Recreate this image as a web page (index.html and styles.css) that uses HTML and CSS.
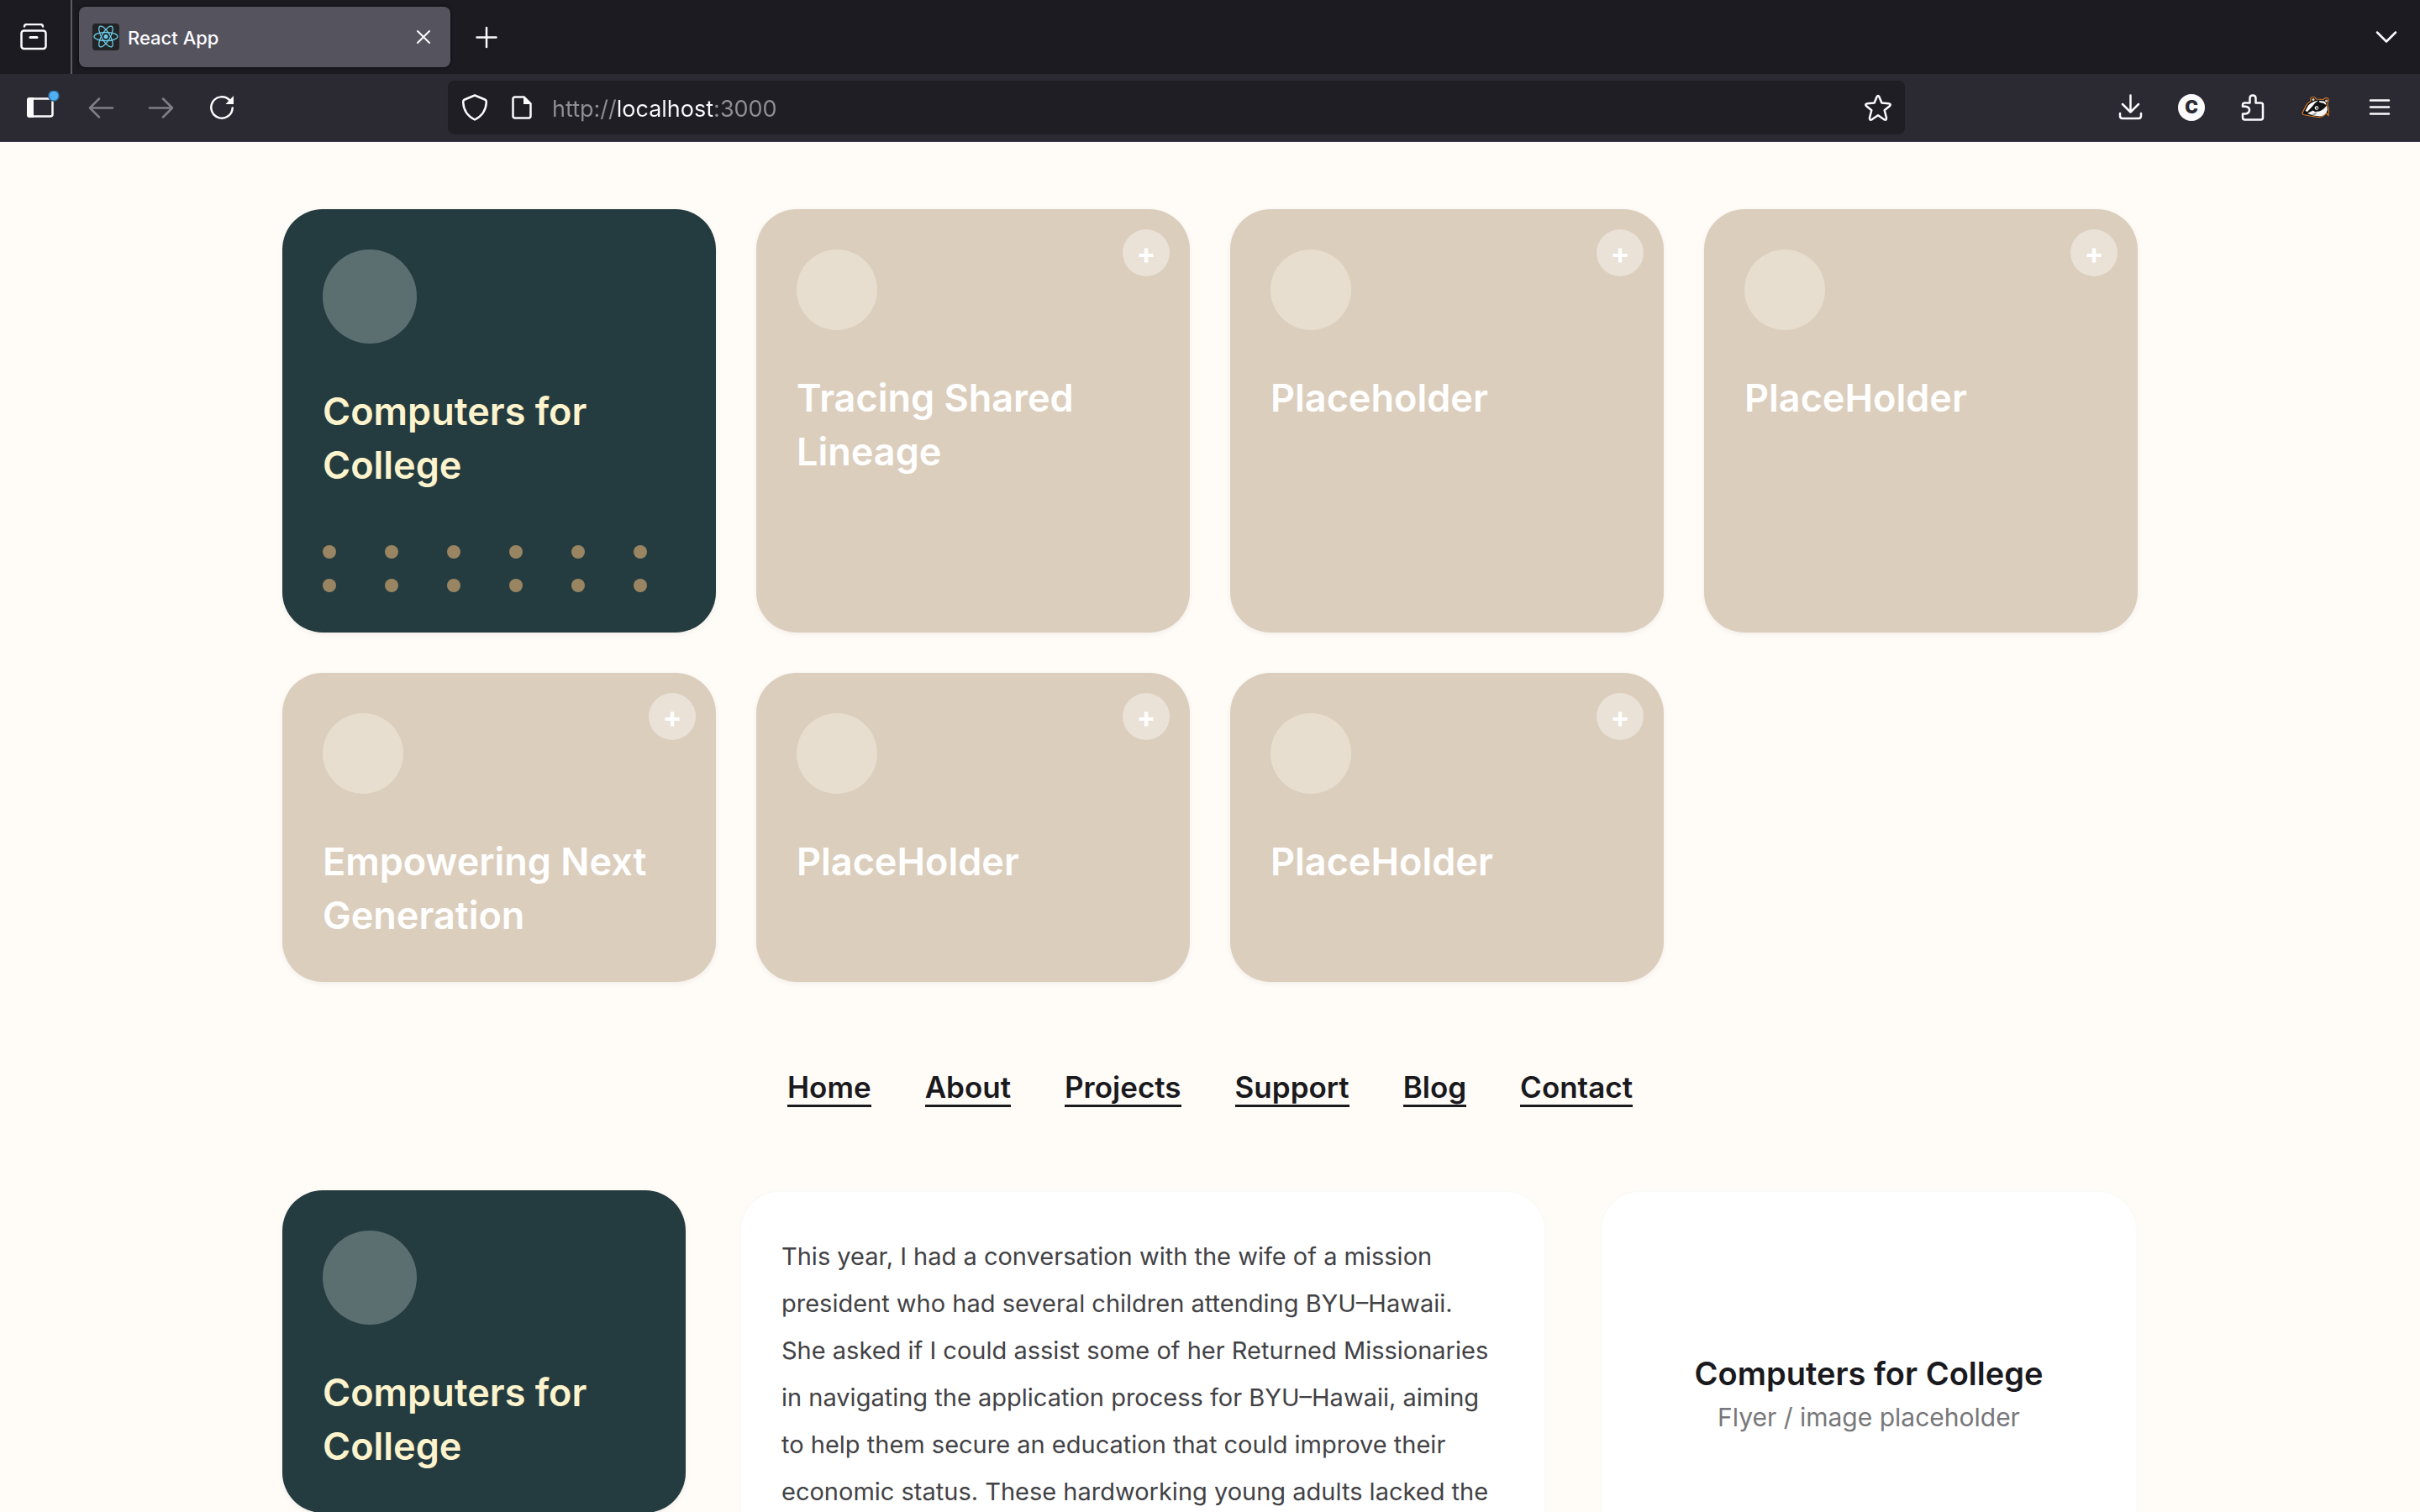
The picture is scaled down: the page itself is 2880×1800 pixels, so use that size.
FILE: index.html
```html
<!DOCTYPE html>
<html lang="en">
<head>
<meta charset="utf-8">
<title>React App</title>
<link rel="stylesheet" href="styles.css">
</head>
<body>
<header class="browser">
  <div class="tabbar">
    <button class="tabbar-button recent" aria-label="Recent browsing">
      <svg class="icon" viewBox="0 0 32 32"><path d="M5 3.500Q5 1 8 1H24Q27 1 27 3.500" /><rect x="1.500" y="8.500" width="29" height="21.500" rx="3"/><path d="M12 16.500H20" stroke-width="3"/></svg>
    </button>
    <div class="tab">
      <svg class="favicon" viewBox="0 0 32 32"><rect width="32" height="32" rx="4" fill="#222425"/><g fill="none" stroke="#6dcdea" stroke-width="1.300"><ellipse cx="16" cy="15.500" rx="14" ry="5"/><ellipse cx="16" cy="15.500" rx="14" ry="5" transform="rotate(60 16 15.500)"/><ellipse cx="16" cy="15.500" rx="14" ry="5" transform="rotate(120 16 15.500)"/></g><circle cx="16" cy="15.500" r="2.500" fill="#6dcdea"/></svg>
      <span class="tab-title">React App</span>
      <button class="tab-close" aria-label="Close tab"><svg class="icon-small" viewBox="0 0 20 20"><path d="M3 3L17 17M17 3L3 17"/></svg></button>
    </div>
    <button class="tabbar-button" aria-label="New tab"><svg class="icon" viewBox="0 0 32 32"><path d="M16 5V28M4.500 16.500H27.500"/></svg></button>
    <button class="tabbar-button all-tabs" aria-label="List all tabs"><svg class="icon" viewBox="0 0 32 32"><path d="M5 10.500L16 21.500L27 10.500"/></svg></button>
  </div>
  <div class="toolbar">
    <div class="tools">
      <button class="tool" aria-label="Sidebar"><svg class="icon wide" viewBox="0 0 48 40"><rect x="9.500" y="9.500" width="29" height="21" rx="2.500"/><path d="M8 11Q8 8 11 8H16V32H11Q8 32 8 29Z" fill="#fbfbfe" stroke="none"/><circle cx="40" cy="6" r="7" fill="#2f5f80" stroke="none"/><circle cx="40" cy="6" r="5.500" fill="#4fb0f3" stroke="none"/></svg></button>
      <button class="tool dim" aria-label="Back"><svg class="icon" viewBox="0 0 32 32"><path d="M30 16.500H3.500M14 5.500L3 16.500L14 27.500"/></svg></button>
      <button class="tool dim" aria-label="Forward"><svg class="icon" viewBox="0 0 32 32"><path d="M2 16.500H28.500M18 5.500L29 16.500L18 27.500"/></svg></button>
      <button class="tool" aria-label="Reload"><svg class="icon" viewBox="0 0 32 32"><path d="M25 7A12.700 12.700 0 1 0 28.700 16.500"/><path d="M30 2V12H20.500Z" fill="#fbfbfe" stroke="none"/></svg></button>
    </div>
    <div class="urlbar">
      <button class="url-button" aria-label="Tracking protection"><svg class="icon" viewBox="0 0 32 32"><path d="M16 1.500L28 6.500Q30 7.300 29.800 10Q29 24 16 30.500Q3 24 2.200 10Q2 7.300 4 6.500Z"/></svg></button>
      <button class="url-button" aria-label="Site information"><svg class="icon" viewBox="0 0 32 32"><path d="M18.500 3.500H8Q5.500 3.500 5.500 6V26Q5.500 28.500 8 28.500H24Q26.500 28.500 26.500 26V11.500Z"/><path d="M18 3V12H27.500Z" fill="#fbfbfe" stroke="none"/></svg></button>
      <input class="url-input" type="text" aria-label="Address" value="http://localhost:3000">
      <button class="url-button" aria-label="Bookmark this page"><svg class="icon" viewBox="0 0 32 32"><path d="M14.600 3.200Q16 .8 17.400 3.200L20.400 10.500L28.700 11.300Q32 11.800 29.800 14.300L23.700 19.300L26 28.300Q26.300 31.500 23.300 30.300L16 25.300L8.700 30.300Q5.700 31.500 6 28.300L8.300 19.300L2.200 14.300Q0 11.800 3.300 11.300L11.600 10.500Z"/></svg></button>
    </div>
    <div class="tools">
      <button class="tool" aria-label="Downloads"><svg class="icon" viewBox="0 0 32 32"><path d="M15.500 1.500V21.500M6 12L15.500 21.500L25 12M3 23V26Q3 29 6 29H25Q28 29 28 26V23"/></svg></button>
      <button class="tool" aria-label="Extension C"><span class="letter-badge">C</span></button>
      <button class="tool" aria-label="Extensions"><svg class="icon" viewBox="0 0 32 32"><path d="M13.500 10.500V5Q13.500 1.500 17 1.500Q20.500 1.500 20.500 5V10.500H26.500Q29 10.500 29 13V28Q29 30.500 26.500 30.500H7.500Q5 30.500 5 28V23.500H8.500Q13 22.500 13 19Q13 15.500 8.500 14.800H5V13Q5 10.500 7.500 10.500Z"/></svg></button>
      <button class="tool" aria-label="Privacy Badger"><svg class="wide-badge" viewBox="0 0 40 32"><path d="M8.500 21.500L12.500 13.500Q14 10.500 18 8.500Q17 3.500 20.500 3.500Q23.500 3.500 24.500 6L33 6.500Q35 4 38 5Q40.500 7.500 38 10.500L38 14L39.500 17L39 25.500L36.500 22.500Q33 27.500 27 27.500L17 26L9.500 24.500Q7.500 23.500 8.500 21.500Z" fill="#121212" stroke="#dc7b27" stroke-width="1.200"/><circle cx="21" cy="6.500" r="1.500" fill="#d8d8d8"/><circle cx="36.500" cy="8" r="1.500" fill="#d8d8d8"/><path d="M11.500 20L15 13.500Q19 9 27 7.500Q22 11 19.500 15L14 21Z" fill="#fff"/><path d="M28 8L34 8.500Q37 11 36.500 13Q33 9.800 28.500 10Z" fill="#fff"/><path d="M14 23L20.500 19.500L23 21L28 20.500Q33 19 37 13.500L38 18.500Q36 25.500 29 26.500L21 25.500Z" fill="#f5f5f5"/><circle cx="25" cy="16.500" r="2.300" fill="#fff"/><circle cx="25.300" cy="16.700" r="1.100" fill="#111"/><path d="M19 24.500L25 21L24.500 24L21.500 25.500Z" fill="#a5a5a5"/></svg></button>
      <button class="tool menu" aria-label="Application menu"><svg class="icon" viewBox="0 0 32 32"><path d="M5 7.500H27M5 15.500H27M5 23.500H27" stroke-width="2.500"/></svg></button>
    </div>
  </div>
</header>

<main class="page">
  <section class="projects">
    <article class="card featured">
      <span class="avatar"></span>
      <h2 class="card-title">Computers for College</h2>
      <div class="dots"><i class="dot"></i><i class="dot"></i><i class="dot"></i><i class="dot"></i><i class="dot"></i><i class="dot"></i><i class="dot"></i><i class="dot"></i><i class="dot"></i><i class="dot"></i><i class="dot"></i><i class="dot"></i></div>
    </article>
    <article class="card"><span class="avatar"></span><h2 class="card-title">Tracing Shared Lineage</h2><button class="expand" aria-label="Open">+</button></article>
    <article class="card"><span class="avatar"></span><h2 class="card-title">Placeholder</h2><button class="expand" aria-label="Open">+</button></article>
    <article class="card"><span class="avatar"></span><h2 class="card-title">PlaceHolder</h2><button class="expand" aria-label="Open">+</button></article>
    <article class="card"><span class="avatar"></span><h2 class="card-title">Empowering Next Generation</h2><button class="expand" aria-label="Open">+</button></article>
    <article class="card"><span class="avatar"></span><h2 class="card-title">PlaceHolder</h2><button class="expand" aria-label="Open">+</button></article>
    <article class="card"><span class="avatar"></span><h2 class="card-title">PlaceHolder</h2><button class="expand" aria-label="Open">+</button></article>
  </section>

  <nav class="site-nav">
    <a href="#home">Home</a>
    <a href="#about">About</a>
    <a href="#projects">Projects</a>
    <a href="#support">Support</a>
    <a href="#blog">Blog</a>
    <a href="#contact">Contact</a>
  </nav>

  <section class="detail">
    <article class="card featured">
      <span class="avatar"></span>
      <h2 class="card-title">Computers for College</h2>
    </article>
    <article class="panel">
      <p class="story">This year, I had a conversation with the wife of a mission president who had several children attending BYU–Hawaii. She asked if I could assist some of her Returned Missionaries in navigating the application process for BYU–Hawaii, aiming to help them secure an education that could improve their economic status. These hardworking young adults lacked the</p>
    </article>
    <aside class="panel flyer">
      <h3 class="flyer-title">Computers for College</h3>
      <p class="flyer-note">Flyer / image placeholder</p>
    </aside>
  </section>
</main>
</body>
</html>
```
FILE: styles.css
```css
* { box-sizing: border-box; }

body {
  margin: 0;
  height: 100vh;
  display: flex;
  flex-direction: column;
  overflow: hidden;
  background: #fffcf7;
  font-family: Inter, "Liberation Sans", sans-serif;
}

h2, h3, p { margin: 0; }

button {
  padding: 0;
  border: 0;
  background: none;
  color: inherit;
  font: inherit;
}

/* Browser chrome */
.browser { flex: none; color: #fbfbfe; }

.icon, .icon-small {
  display: block;
  width: 32px;
  height: 32px;
  fill: none;
  stroke: #fbfbfe;
  stroke-width: 2.5;
  stroke-linecap: round;
  stroke-linejoin: round;
}
.icon-small { width: 20px; height: 20px; stroke-width: 2; }
.icon.wide { width: 48px; height: 40px; }
.wide-badge { display: block; width: 40px; height: 32px; }

.tabbar {
  display: flex;
  align-items: center;
  height: 88px;
  background: #1c1b22;
}
.tabbar-button {
  display: grid;
  place-items: center;
  width: 86px;
  height: 88px;
}
.recent { border-right: 2px solid #5b5b66; padding-right: 4px; }
.all-tabs { width: 80px; margin-left: auto; }

.tab {
  display: flex;
  align-items: center;
  gap: 10px;
  width: 442px;
  height: 72px;
  margin-left: 8px;
  padding: 0 22px 0 16px;
  border-radius: 8px;
  background: #55535e;
  box-shadow: 0 0 4px rgba(0, 0, 0, .7);
}
.favicon { width: 32px; height: 32px; }
.tab-title { flex: 1; padding-top: 2px; font-size: 22px; line-height: 32px; font-weight: 500; }

.toolbar {
  display: flex;
  align-items: center;
  height: 81px;
  padding: 0 16px;
  border-bottom: 1px solid #3a3944;
  background: #2b2a33;
}
.tools { display: flex; gap: 8px; }
.tool {
  display: grid;
  place-items: center;
  width: 64px;
  height: 64px;
}
.dim { opacity: .4; }
.menu { margin-left: 8px; }
.letter-badge {
  display: grid;
  place-items: center;
  width: 32px;
  height: 32px;
  border-radius: 50%;
  background: #fbfbfe;
  color: #2b2a33;
  font-size: 21px;
  line-height: 24px;
  font-weight: 900;
}
.urlbar {
  display: flex;
  flex: 1;
  align-items: center;
  height: 64px;
  margin: 0 237px;
  padding: 0 4px;
  border-radius: 8px;
  background: #1f1e25;
}
.url-button {
  display: grid;
  place-items: center;
  width: 56px;
  height: 56px;
}
.url-input {
  flex: 1;
  height: 56px;
  padding: 2px 8px 0;
  border: 0;
  outline: 0;
  background: linear-gradient(90deg, #8f8f94 86px, #fbfbfe 86px 201px, #8f8f94 201px);
  background-clip: text;
  -webkit-background-clip: text;
  color: transparent;
  font-family: inherit;
  font-size: 27px;
}

/* Page */
.page {
  flex: 1;
  width: 100%;
  max-width: 2304px;
  margin: 0 auto;
  padding: 80px 48px 0;
}

.projects {
  display: grid;
  grid-template-columns: repeat(4, 1fr);
  gap: 48px;
}
.card {
  position: relative;
  padding: 48px 48px 47px;
  border-radius: 48px;
  background: #dccebd;
  box-shadow: 0 2px 6px rgba(0, 0, 0, .06);
  color: #fff;
}
.avatar {
  display: block;
  width: 96px;
  height: 96px;
  margin-bottom: 49px;
  border-radius: 50%;
  background: #e7decf;
}
.card-title { font-size: 45px; line-height: 64px; font-weight: 600; }
.expand {
  position: absolute;
  top: 24px;
  right: 24px;
  display: grid;
  place-items: center;
  width: 56px;
  height: 56px;
  border-radius: 50%;
  background: #eae1d7;
  font-size: 34px;
  font-weight: 700;
}
.featured { background: #243c40; color: #fdf3cd; }
.featured .avatar { width: 112px; height: 112px; background: #5b6f71; }

.dots {
  display: grid;
  grid-template-columns: repeat(6, 1fr);
  gap: 24px;
  margin: 63px 0 1px;
}
.dot {
  width: 16px;
  height: 16px;
  border-radius: 50%;
  background: #998562;
}

.site-nav {
  display: flex;
  justify-content: center;
  gap: 64px;
  margin: 104px 0 99px;
}
.site-nav a {
  border-bottom: 3px solid #1a1a1e;
  color: #1a1a1e;
  font-size: 35px;
  line-height: 42px;
  font-weight: 600;
  text-decoration: none;
}

.detail {
  display: grid;
  grid-template-columns: 3fr 6fr 4fr;
  align-items: start;
  gap: 64px;
}
.panel {
  min-height: 488px;
  padding: 49px 56px 49px 48px;
  border: 2px solid #fafaf7;
  border-radius: 48px;
  background: #fff;
}
.story { color: #424245; font-size: 29px; line-height: 56px; }
.panel.flyer {
  display: flex;
  flex-direction: column;
  align-items: center;
  justify-content: center;
  padding: 48px;
}
.flyer-title { color: #1a1a1e; font-size: 38px; line-height: 52px; font-weight: 600; }
.flyer-note { color: #77777a; font-size: 30px; line-height: 52px; }
```
